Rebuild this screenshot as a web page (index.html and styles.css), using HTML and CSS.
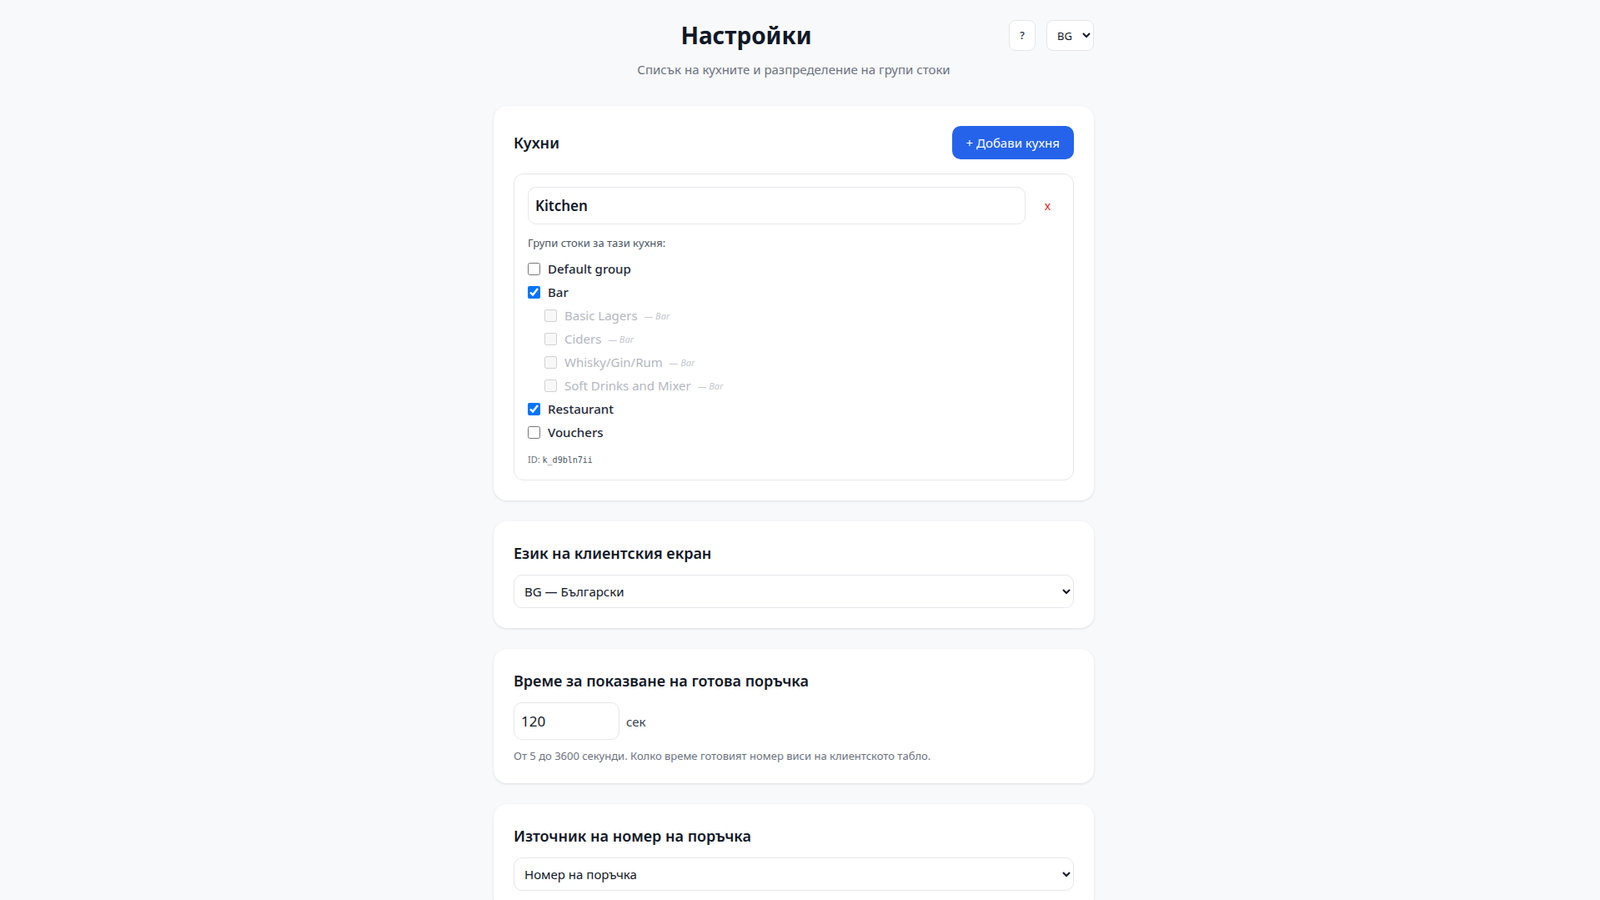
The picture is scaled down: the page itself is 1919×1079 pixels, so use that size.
FILE: index.html
```html
<!DOCTYPE html>
<html lang="bg">
<head>
  <meta charset="UTF-8">
  <meta name="viewport" content="width=device-width, initial-scale=1.0">
  <title>Настройки</title>
  <link rel="stylesheet" href="styles.css">
</head>
<body>
  <div class="page">
    <div class="topbar">
      <h1>Настройки</h1>
      <div class="actions">
        <button class="help-btn" type="button">?</button>
        <select class="lang-select">
          <option>BG</option>
          <option>EN</option>
        </select>
      </div>
    </div>
    <p class="subtitle">Списък на кухните и разпределение на групи стоки</p>

    <section class="card">
      <div class="card-head">
        <h2>Кухни</h2>
        <button class="add-btn" type="button">+ Добави кухня</button>
      </div>

      <div class="kitchen">
        <div class="kitchen-row">
          <input class="kitchen-name" type="text" value="Kitchen">
          <button class="remove-btn" type="button">x</button>
        </div>
        <div class="groups-label">Групи стоки за тази кухня:</div>
        <ul class="groups">
          <li><label><input type="checkbox"> Default group</label></li>
          <li><label><input type="checkbox" checked> Bar</label></li>
          <li class="sub"><label><input type="checkbox" disabled> Basic Lagers <span class="parent">— Bar</span></label></li>
          <li class="sub"><label><input type="checkbox" disabled> Ciders <span class="parent">— Bar</span></label></li>
          <li class="sub"><label><input type="checkbox" disabled> Whisky/Gin/Rum <span class="parent">— Bar</span></label></li>
          <li class="sub"><label><input type="checkbox" disabled> Soft Drinks and Mixer <span class="parent">— Bar</span></label></li>
          <li><label><input type="checkbox" checked> Restaurant</label></li>
          <li><label><input type="checkbox"> Vouchers</label></li>
        </ul>
        <div class="kitchen-id">ID: <code>k_d9bln7ii</code></div>
      </div>
    </section>

    <section class="card">
      <h2>Език на клиентския екран</h2>
      <select class="field-select">
        <option>BG — Български</option>
        <option>EN — English</option>
      </select>
    </section>

    <section class="card">
      <h2>Време за показване на готова поръчка</h2>
      <div class="seconds-row">
        <input class="seconds" type="number" value="120" min="5" max="3600">
        <span class="unit">сек</span>
      </div>
      <p class="hint">От 5 до 3600 секунди. Колко време готовият номер виси на клиентското табло.</p>
    </section>

    <section class="card">
      <h2>Източник на номер на поръчка</h2>
      <select class="field-select">
        <option>Номер на поръчка</option>
        <option>Номер на маса</option>
      </select>
    </section>
  </div>
</body>
</html>
```

FILE: styles.css
```css
html, body {
  margin: 0;
  background: #f8f9fb;
}
body {
  padding-right: 15px;
  font-family: "Noto Sans", "Open Sans", sans-serif;
  color: #111827;
}
.page {
  max-width: 720px;
  margin: 0 auto;
  padding: 24px 0 60px;
}
.topbar {
  display: flex;
  align-items: center;
  height: 37px;
}
h1 {
  flex: 1;
  margin: 0;
  padding-right: 12px;
  text-align: center;
  font-size: 28px;
  font-weight: 700;
  line-height: 37px;
}
.actions {
  display: flex;
  gap: 13px;
}
.help-btn {
  width: 32px;
  height: 37px;
  background: #fff;
  border: 1px solid #e5e7eb;
  border-radius: 8px;
  font-family: inherit;
  font-size: 12px;
  font-weight: 600;
  color: #374151;
  cursor: pointer;
}
.lang-select {
  width: 57px;
  height: 37px;
  background: #fff;
  border: 1px solid #e5e7eb;
  border-radius: 8px;
  font-family: inherit;
  font-size: 13px;
  padding: 0 4px 0 8px;
  color: #111827;
}
.subtitle {
  margin: 11px 0 33px;
  text-align: center;
  font-size: 15px;
  line-height: 22px;
  color: #6b7280;
}
.card {
  background: #fff;
  border-radius: 16px;
  padding: 24px;
  margin-bottom: 25px;
  box-shadow: 0 1px 3px rgba(15, 23, 42, 0.12);
}
.card h2 {
  margin: 0 0 12px;
  font-size: 18px;
  font-weight: 600;
  line-height: 28px;
}
.card-head {
  display: flex;
  justify-content: space-between;
  align-items: center;
  margin-bottom: 17px;
}
.card-head h2 {
  margin: 0;
}
.add-btn {
  height: 40px;
  padding: 0 17px;
  background: #2563eb;
  color: #fff;
  border: none;
  border-radius: 10px;
  font-family: inherit;
  font-size: 15px;
  cursor: pointer;
}
.kitchen {
  border: 1px solid #e5e7eb;
  border-radius: 12px;
  padding: 15px 16px 14px;
}
.kitchen-row {
  display: flex;
  align-items: center;
  gap: 12px;
}
.kitchen-name {
  flex: 1;
  height: 45px;
  box-sizing: border-box;
  padding: 0 8px;
  border: 1px solid #e5e7eb;
  border-radius: 10px;
  font-family: inherit;
  font-size: 17px;
  font-weight: 600;
  color: #111827;
}
.remove-btn {
  width: 29px;
  background: none;
  border: none;
  color: #dc2626;
  font-family: inherit;
  font-size: 14px;
  padding: 0;
  cursor: pointer;
}
.groups-label {
  margin-top: 12px;
  font-size: 13px;
  line-height: 20px;
  color: #4b5563;
}
.groups {
  list-style: none;
  margin: 7px 0 0;
  padding: 0;
}
.groups li {
  height: 28px;
  display: flex;
  align-items: center;
}
.groups label {
  display: flex;
  align-items: center;
  gap: 4px;
  font-size: 15px;
  font-weight: 500;
  color: #1f2937;
}
.groups input {
  width: 15px;
  height: 15px;
  margin: 0 5px 0 0;
  accent-color: #0075ff;
}
.groups .sub {
  padding-left: 20px;
}
.groups .sub label {
  font-weight: 400;
  color: #b3b7bf;
}
.parent {
  margin-left: 4px;
  font-size: 11px;
  font-style: italic;
  color: #c4c8cf;
}
.kitchen-id {
  margin-top: 10px;
  font-size: 11px;
  line-height: 18px;
  color: #6b7280;
}
.kitchen-id code {
  font-family: "DejaVu Sans Mono", "Liberation Mono", monospace;
  font-size: 10px;
  color: #4b5563;
}
.field-select {
  width: 100%;
  height: 40px;
  padding: 0 8px;
  background: #fff;
  border: 1px solid #e5e7eb;
  border-radius: 10px;
  font-family: inherit;
  font-size: 15px;
  color: #111827;
}
.seconds-row {
  display: flex;
  align-items: center;
  gap: 8px;
}
.seconds {
  width: 127px;
  height: 45px;
  box-sizing: border-box;
  padding: 0 8px;
  border: 1px solid #e5e7eb;
  border-radius: 10px;
  font-family: inherit;
  font-size: 17px;
  color: #111827;
}
.unit {
  font-size: 15px;
  color: #374151;
}
.hint {
  margin: 10px 0 0;
  font-size: 13px;
  line-height: 18px;
  color: #6b7280;
}
```
